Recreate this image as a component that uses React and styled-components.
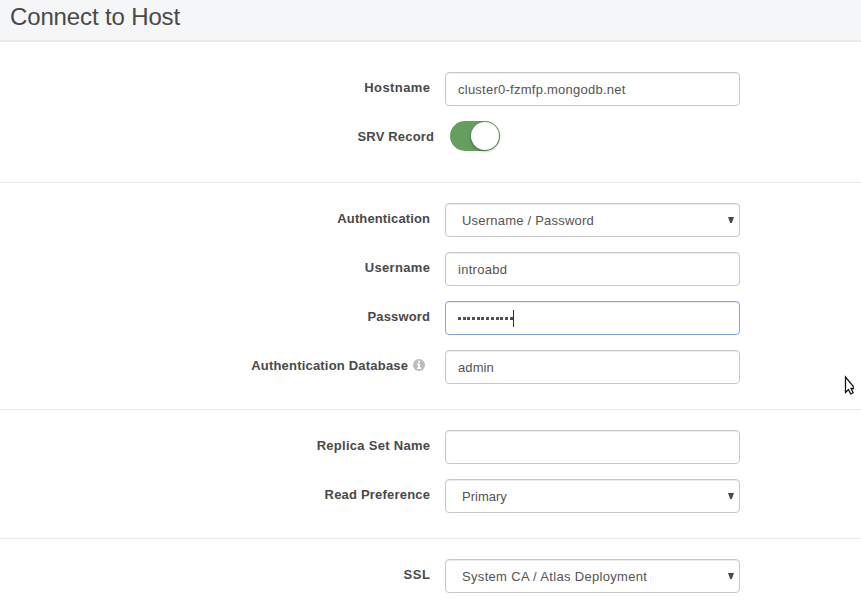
import React from 'react';
import styled, { createGlobalStyle } from 'styled-components';

const GlobalStyle = createGlobalStyle`
  * { box-sizing: border-box; }
  html, body { margin: 0; height: 607px; overflow: hidden; background: #fff; }
  body { font-family: "Liberation Sans", Arial, sans-serif; color: #494949; }
`;

const Page = styled.main`
  position: relative;
  width: 861px;
  height: 607px;
  overflow: hidden;
`;

const Header = styled.header`
  height: 42px;
  padding: 3px 0 0 10px;
  background: #f5f6f8;
  border-bottom: 2px solid #e7e8e9;
`;

const Title = styled.h1`
  margin: 0;
  font-size: 24px;
  font-weight: 400;
  line-height: 28px;
  letter-spacing: -0.14px;
`;

const Section = styled.section`
  display: flex;
  flex-direction: column;
  gap: 15px;
  padding: ${(p) => (p.$first ? '30px' : '20px')} 0 25px;
  border-bottom: 1px solid #ebebed;
`;

const Row = styled.div`
  display: grid;
  grid-template-columns: 430px 295px;
  column-gap: 15px;
  height: ${(p) => p.$height || 34}px;
`;

const Label = styled.label`
  display: flex;
  justify-content: flex-end;
  align-items: center;
  height: 31px;
  padding-right: ${(p) => p.$inset || 0}px;
  margin-right: ${(p) => p.$outset || 0}px;
  font-size: 13px;
  font-weight: 700;
  white-space: nowrap;
`;

const LabelText = styled.span`
  margin-right: -${(p) => p.$spacing || 0}px;
  letter-spacing: ${(p) => p.$spacing || 0}px;
`;

const Field = styled.div`
  display: flex;
  align-items: center;
  height: 34px;
  padding: 1px 5px 0 ${(p) => (p.$select ? 16 : 12)}px;
  border: 1px solid ${(p) => (p.$focused ? '#7aa8ea' : '#c8c8ca')};
  border-radius: 4px;
  background: #fff;
  box-shadow: inset 0 1px 1px rgba(0, 0, 0, 0.08);
  color: #555354;
  font-size: 13px;
`;

const Value = styled.span`
  flex: 1;
  white-space: nowrap;
  letter-spacing: ${(p) => p.$spacing || 0}px;
`;

const Arrow = styled.svg`
  width: 6px;
  height: 6px;
  margin-top: -2px;
  fill: #494949;
`;

const Mask = styled.span`
  display: flex;
  gap: 1.7px;
  margin-top: -1px;
`;

const Dot = styled.i`
  width: 3px;
  height: 3px;
  background: #505050;
`;

const Caret = styled.i`
  width: 1px;
  height: 17px;
  margin-left: 0.7px;
  background: #333;
`;

const Switch = styled.div`
  display: flex;
  justify-content: flex-end;
  width: 50px;
  height: 30px;
  margin-left: 5px;
  padding: 1px;
  border-radius: 15px;
  background: #649f60;
`;

const Knob = styled.span`
  width: 28px;
  height: 28px;
  border-radius: 50%;
  background: #fff;
  box-shadow: 0 1px 3px rgba(0, 0, 0, 0.4);
`;

const Info = styled.svg`
  width: 12px;
  height: 12px;
  margin: -1px 0 0 5px;
`;

const Cursor = styled.svg`
  position: absolute;
  left: 844px;
  top: 375px;
  width: 10px;
  height: 21px;
`;

function TextRow({ label, value, spacing, labelSpacing, select, info }) {
  return (
    <Row>
      <Label $inset={info ? 5 : 0}>
        <LabelText $spacing={labelSpacing}>{label}</LabelText>
        {info && (
          <Info viewBox="0 0 12 12">
            <circle cx="6" cy="6" r="6" fill="#bdbcbc" />
            <path d="M5 1.8h2v1.7H5zM4 4.5h3v4h1V10H4V8.5h1V6H4z" fill="#fff" />
          </Info>
        )}
      </Label>
      <Field $select={select}>
        <Value $spacing={spacing}>{value}</Value>
        {select && <Arrow viewBox="0 0 6 6"><path d="M0 0h6L3.8 6H2.2z" /></Arrow>}
      </Field>
    </Row>
  );
}

export default function App() {
  return (
    <>
      <GlobalStyle />
      <Page>
        <Header><Title>Connect to Host</Title></Header>
        <Section $first>
          <TextRow label="Hostname" labelSpacing={0.4} value="cluster0-fzmfp.mongodb.net" spacing={0.25} />
          <Row $height={36}>
            <Label $outset={-4}><LabelText $spacing={0.18}>SRV Record</LabelText></Label>
            <Switch><Knob /></Switch>
          </Row>
        </Section>
        <Section>
          <TextRow label="Authentication" labelSpacing={0.13} value="Username / Password" spacing={0.22} select />
          <TextRow label="Username" labelSpacing={0.35} value="introabd" spacing={0.27} />
          <Row>
            <Label><LabelText $spacing={0.15}>Password</LabelText></Label>
            <Field $focused>
              <Mask>{Array.from({ length: 12 }, (_, i) => <Dot key={i} />)}</Mask>
              <Caret />
            </Field>
          </Row>
          <TextRow label="Authentication Database" labelSpacing={0.2} value="admin" spacing={0.1} info />
        </Section>
        <Section>
          <TextRow label="Replica Set Name" labelSpacing={0.28} value="" />
          <TextRow label="Read Preference" labelSpacing={0.2} value="Primary" select />
        </Section>
        <Section>
          <TextRow label="SSL" labelSpacing={0.6} value="System CA / Atlas Deployment" spacing={0.32} select />
        </Section>
        <Cursor viewBox="0 0 10 21">
          <path d="M1.5 2v15.5l3-3 2.2 4.5 2.4-1.2-2-4.3h4z" fill="#fff" stroke="#111" strokeWidth="1.3" />
        </Cursor>
      </Page>
    </>
  );
}
